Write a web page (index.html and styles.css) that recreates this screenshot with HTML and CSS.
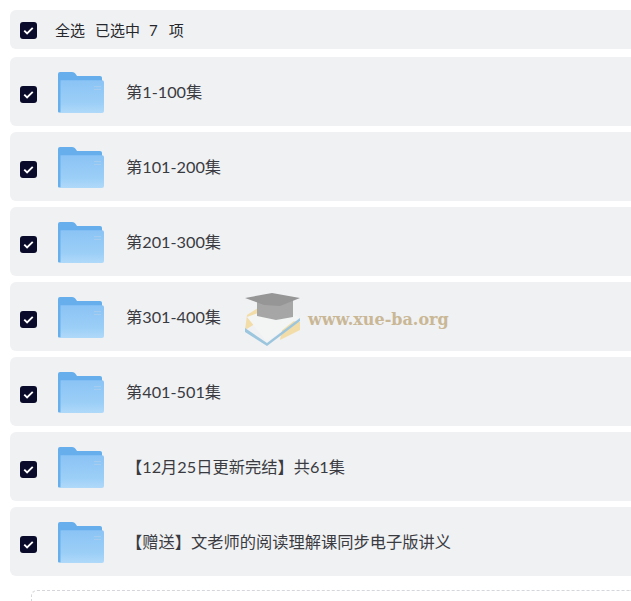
FILE: index.html
```html
<!DOCTYPE html>
<html lang="zh-CN">
<head>
    <meta charset="UTF-8">
    <meta name="viewport" content="width=device-width, initial-scale=1.0">
    <title>文件列表</title>
    <link rel="stylesheet" href="styles.css">
</head>
<body>
    <svg class="defs" width="0" height="0">
        <defs>
            <linearGradient id="folderFront" x1="0" y1="0" x2="0" y2="1">
                <stop offset="0" stop-color="#8ac3f5"/>
                <stop offset="0.7" stop-color="#9ccff7"/>
                <stop offset="1" stop-color="#b0d9f9"/>
            </linearGradient>
            <symbol id="folder" viewBox="0 0 46 42" preserveAspectRatio="none">
                <path d="M0 2a2 2 0 0 1 2-2h12c2 0 3 1 4 2.500l1 1.500h23a2 2 0 0 1 2 2v6H0z" fill="#66afec"/>
                <path d="M0 6h3v35.500H1a1 1 0 0 1-1-1z" fill="#66afec"/>
                <path d="M2.500 8.500H44a2 2 0 0 1 2 2V40a2 2 0 0 1-2 2H3.500a1 1 0 0 1-1-1z" fill="url(#folderFront)"/>
                <path d="M36 15h7M36 18h7" stroke="#a9cdee" stroke-width="1"/>
            </symbol>
        </defs>
    </svg>

    <div class="list">
        <div class="row row-head">
            <span class="check"><svg viewBox="0 0 18 18"><path d="M4.500 9.200l3 3 6-6" /></svg></span>
            <span class="head-text">全选</span>
            <span class="head-selected">已选中</span>
            <span class="head-num">7</span>
            <span class="head-unit">项</span>
        </div>

        <div class="row">
            <span class="check"><svg viewBox="0 0 18 18"><path d="M4.500 9.200l3 3 6-6" /></svg></span>
            <svg class="folder"><use href="#folder"/></svg>
            <span class="name">第1-100集</span>
        </div>
        <div class="row">
            <span class="check"><svg viewBox="0 0 18 18"><path d="M4.500 9.200l3 3 6-6" /></svg></span>
            <svg class="folder"><use href="#folder"/></svg>
            <span class="name">第101-200集</span>
        </div>
        <div class="row">
            <span class="check"><svg viewBox="0 0 18 18"><path d="M4.500 9.200l3 3 6-6" /></svg></span>
            <svg class="folder"><use href="#folder"/></svg>
            <span class="name">第201-300集</span>
        </div>
        <div class="row">
            <span class="check"><svg viewBox="0 0 18 18"><path d="M4.500 9.200l3 3 6-6" /></svg></span>
            <svg class="folder"><use href="#folder"/></svg>
            <span class="name">第301-400集</span>
            <!-- 水印 -->
            <div class="watermark">
                <svg class="wm-logo" viewBox="0 0 58 58">
                    <path d="M1 40l2-15 11-7v14z" fill="#f2dca8"/>
                    <path d="M40 30l16 2v8L36 50z" fill="#f2dca8"/>
                    <path d="M1 38l22 15 33-25v3L23 56 1 42z" fill="#9cc6de"/>
                    <path d="M3 27l20 25 32-25-19-6-14-1z" fill="#f3f5f5"/>
                    <path d="M13 9h36v18l-17 3-19-4z" fill="#a6a6a6"/>
                    <path d="M1 8l27-5 28 5-20 8-16-1z" fill="#969696"/>
                </svg>
                <span class="wm-text">www.xue-ba.org</span>
            </div>
        </div>
        <div class="row">
            <span class="check"><svg viewBox="0 0 18 18"><path d="M4.500 9.200l3 3 6-6" /></svg></span>
            <svg class="folder"><use href="#folder"/></svg>
            <span class="name">第401-501集</span>
        </div>
        <div class="row">
            <span class="check"><svg viewBox="0 0 18 18"><path d="M4.500 9.200l3 3 6-6" /></svg></span>
            <svg class="folder"><use href="#folder"/></svg>
            <span class="name">【12月25日更新完结】共61集</span>
        </div>
        <div class="row">
            <span class="check"><svg viewBox="0 0 18 18"><path d="M4.500 9.200l3 3 6-6" /></svg></span>
            <svg class="folder"><use href="#folder"/></svg>
            <span class="name">【赠送】文老师的阅读理解课同步电子版讲义</span>
        </div>

        <div class="upload-box"></div>
    </div>
</body>
</html>
```

FILE: styles.css
```css
* {
    margin: 0;
    padding: 0;
    box-sizing: border-box;
}

html, body {
    height: 601px;
    overflow: hidden;
}

body {
    background: #fff;
    color: #3a3b41;
    font-family: Lato, "Noto Sans CJK SC", sans-serif;
}

.defs {
    position: absolute;
}

.list {
    display: flex;
    flex-direction: column;
    gap: 6px;
    height: 601px;
    padding: 10px 0 0 10px;
}

.row {
    position: relative;
    display: flex;
    align-items: center;
    flex: none;
    height: 69px;
    padding-left: 10px;
    background: #f0f1f3;
    border-radius: 6px 0 0 6px;
}

.row-head {
    height: 39px;
    margin-bottom: 2px;
    font-size: 15px;
    color: #26272c;
}

.check {
    flex: none;
    width: 17px;
    height: 17px;
    margin-top: 5px;
    background: #0a0a2a;
    border-radius: 3px;
}

.row-head .check {
    margin-top: 2px;
}

.check svg {
    display: block;
    width: 17px;
    height: 17px;
    fill: none;
    stroke: #fff;
    stroke-width: 2;
}

.head-text {
    margin-left: 18px;
}

.head-selected {
    margin-left: 10px;
}

.head-num {
    margin-left: 9px;
}

.head-unit {
    margin-left: 11px;
}

.folder {
    flex: none;
    width: 46px;
    height: 41px;
    margin-left: 21px;
    margin-top: 1px;
}

.name {
    margin-left: 22px;
    margin-top: -2px;
    font-size: 16.250px;
}

.watermark {
    position: absolute;
    left: 234px;
    top: 8px;
    display: flex;
    align-items: center;
    gap: 6px;
}

.wm-logo {
    width: 58px;
    height: 58px;
}

.wm-text {
    font-family: "DejaVu Serif", "Liberation Serif", serif;
    font-size: 16px;
    font-weight: bold;
    color: #c9b795;
    margin-top: 1px;
}

.upload-box {
    flex: none;
    height: 11px;
    margin: 8px 0 0 21px;
    border: 1px dashed #d4d6da;
    border-bottom: none;
    border-right: none;
    border-radius: 6px 0 0 0;
}
```
